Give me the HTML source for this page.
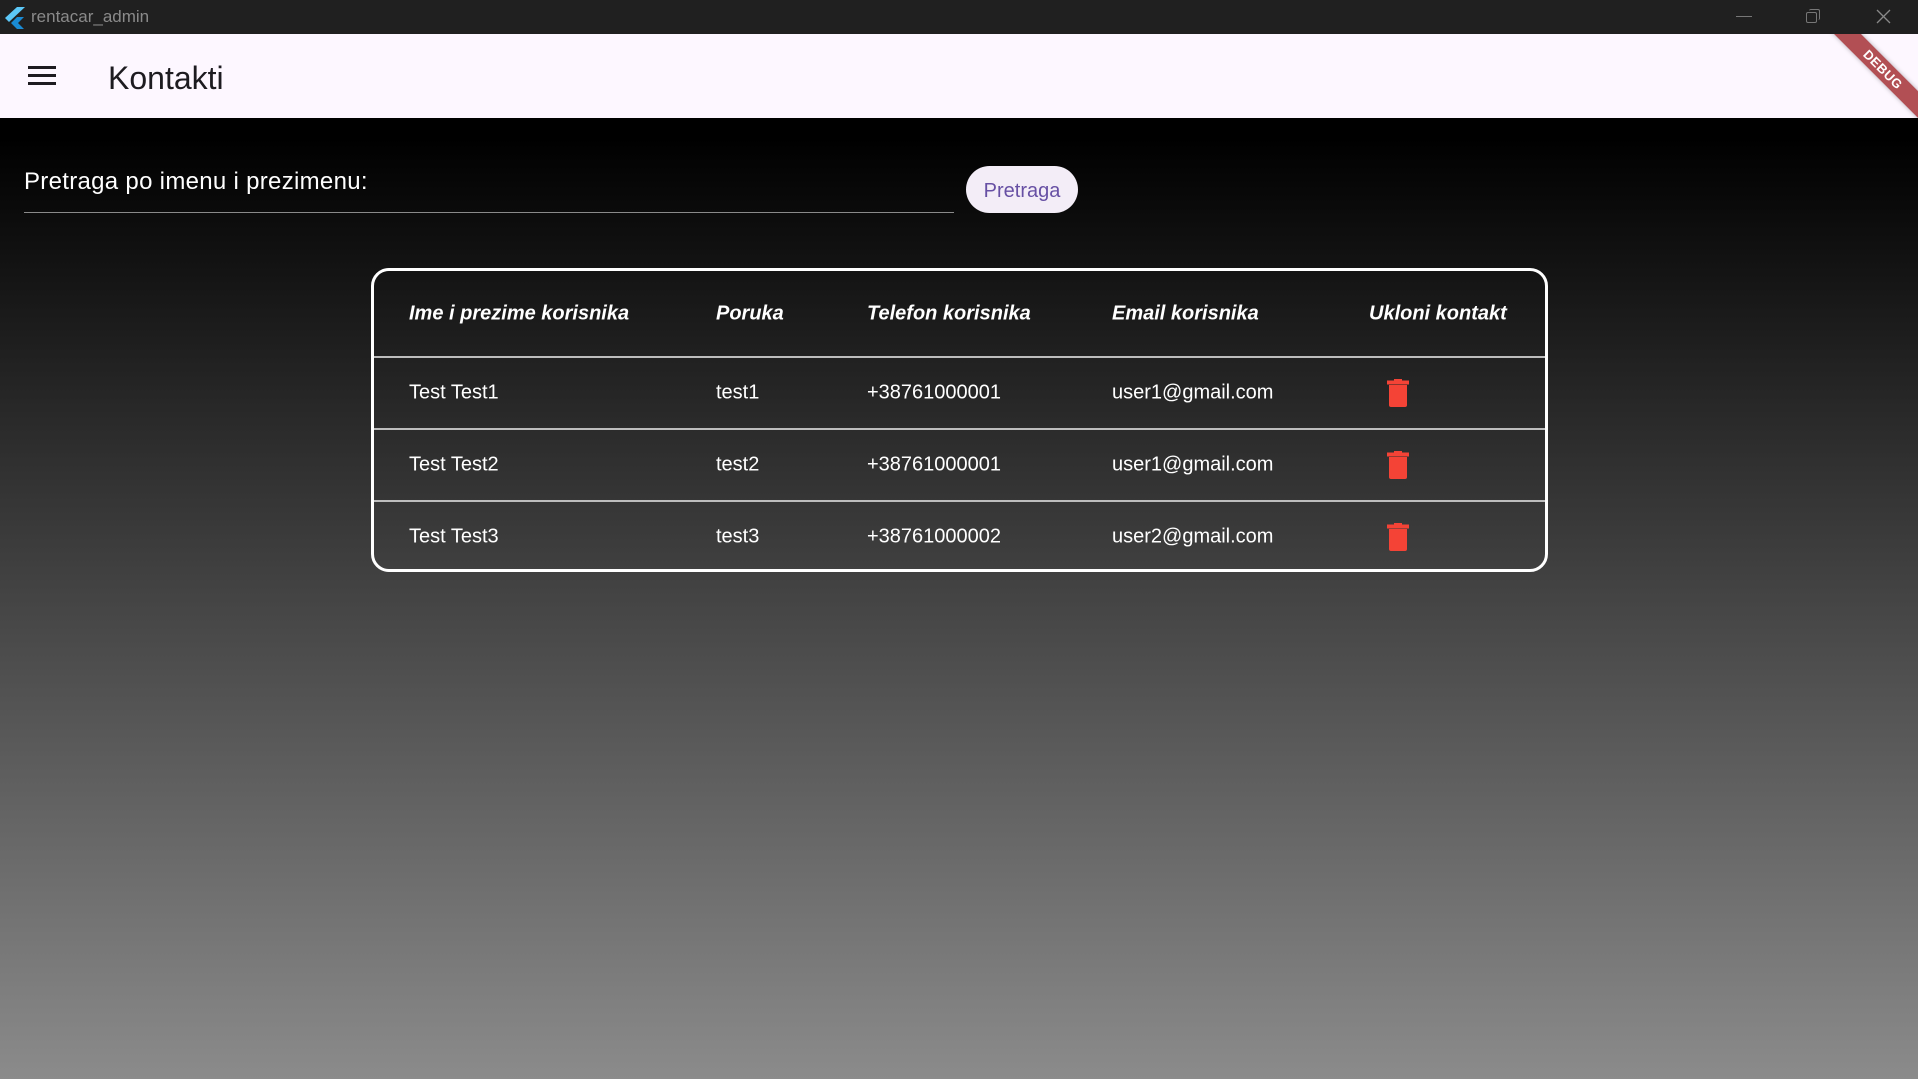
<!DOCTYPE html>
<html><head><meta charset="utf-8"><style>
*{margin:0;padding:0;box-sizing:border-box}
body{width:1918px;height:1079px;overflow:hidden;position:relative;font-family:"Segoe UI","Liberation Sans",sans-serif;background:#000}
.tb{position:absolute;left:0;top:0;width:1918px;height:34px;background:#202020;color:#8a8a8a;font-size:17px}
.tb .t{position:absolute;left:31px;top:7px}
.ab{position:absolute;left:0;top:34px;width:1918px;height:84px;background:#fdf7ff;overflow:hidden}
.ham{position:absolute;left:28px;width:28px;height:3px;background:#1d1b20}
.title{position:absolute;left:108px;top:26px;font-size:32px;color:#1d1b20}
.main{position:absolute;left:0;top:118px;width:1918px;height:961px;background:linear-gradient(#000 0%,#000 2%,#8b8b8b 100%)}
.lbl{position:absolute;left:24px;top:50px;font-size:24px;color:#fff;letter-spacing:0.3px}
.ul{position:absolute;left:24px;top:94px;width:930px;height:1px;background:#8a8a8a}
.btn{position:absolute;left:966px;top:48px;width:112px;height:47px;border-radius:24px;background:#f3edf7;color:#6750a4;font-size:20px;text-align:center;line-height:50px}
.tbl{position:absolute;left:371px;top:150px;width:1177px;height:304px;border:3px solid #fff;border-radius:18px;overflow:hidden}
.row{position:absolute;left:0;width:100%;color:#fff;font-size:20px}
.row span{position:absolute;top:50%;transform:translateY(-50%);white-space:nowrap}
.hd span{font-weight:bold;font-style:italic}
.line{position:absolute;left:0;width:100%;height:2px;background:#bdbdbd}
.trash{position:absolute;left:1013px;top:50%;transform:translateY(-50%);width:22px;height:28px}
</style></head><body>
<div class="tb">
<svg style="position:absolute;left:5px;top:7px" width="20" height="22" viewBox="0 0 20 22"><path d="M12 0L0 11l4 4L20 0z" fill="#5cc8f8"/><path d="M12 10l-6 6 6 6h7l-6-6 6-6z" fill="#1a8bd4"/></svg>
<span class="t">rentacar_admin</span>
<div style="position:absolute;left:1736px;top:16px;width:16px;height:1px;background:#777"></div>
<div style="position:absolute;left:1806px;top:12px;width:11px;height:11px;border:1.5px solid #777;border-radius:2px"></div>
<div style="position:absolute;left:1809px;top:9px;width:11px;height:11px;border-top:1.5px solid #777;border-right:1.5px solid #777;border-radius:2px"></div>
<svg style="position:absolute;left:1876px;top:9px" width="15" height="15"><path d="M1 1L14 14M14 1L1 14" stroke="#888" stroke-width="1.3"/></svg>
</div>
<div class="ab">
<div class="ham" style="top:32px"></div><div class="ham" style="top:40px"></div><div class="ham" style="top:48px"></div>
<div class="title">Kontakti</div>
<div style="position:absolute;left:1783px;top:26px;width:200px;height:19px;background:rgba(170,60,65,0.9);transform:rotate(45deg);color:#fff;font:bold 13px 'Liberation Sans',sans-serif;text-align:center;line-height:19px;letter-spacing:0.5px;box-shadow:0 0 5px rgba(0,0,0,0.3)">DEBUG</div>
</div>
<div class="main">
<div class="lbl">Pretraga po imenu i prezimenu:</div>
<div class="ul"></div>
<div class="btn">Pretraga</div>
<div class="tbl">
<div class="row hd" style="top:0;height:86px"><span style="left:35px">Ime i prezime korisnika</span><span style="left:342px">Poruka</span><span style="left:493px">Telefon korisnika</span><span style="left:738px">Email korisnika</span><span style="left:995px">Ukloni kontakt</span></div>
<div class="line" style="top:85px"></div>
<div class="row" style="top:87px;height:70px"><span style="left:35px">Test Test1</span><span style="left:342px">test1</span><span style="left:493px">+38761000001</span><span style="left:738px">user1@gmail.com</span>
<svg class="trash" viewBox="0 0 22 28"><rect x="7" y="0" width="8" height="2" fill="#f44336"/><rect x="0" y="1.5" width="22" height="4" fill="#f44336"/><path d="M2 6h18v20a2 2 0 0 1-2 2H4a2 2 0 0 1-2-2z" fill="#f44336"/></svg></div>
<div class="line" style="top:157px"></div>
<div class="row" style="top:159px;height:70px"><span style="left:35px">Test Test2</span><span style="left:342px">test2</span><span style="left:493px">+38761000001</span><span style="left:738px">user1@gmail.com</span>
<svg class="trash" viewBox="0 0 22 28"><rect x="7" y="0" width="8" height="2" fill="#f44336"/><rect x="0" y="1.5" width="22" height="4" fill="#f44336"/><path d="M2 6h18v20a2 2 0 0 1-2 2H4a2 2 0 0 1-2-2z" fill="#f44336"/></svg></div>
<div class="line" style="top:229px"></div>
<div class="row" style="top:231px;height:70px"><span style="left:35px">Test Test3</span><span style="left:342px">test3</span><span style="left:493px">+38761000002</span><span style="left:738px">user2@gmail.com</span>
<svg class="trash" viewBox="0 0 22 28"><rect x="7" y="0" width="8" height="2" fill="#f44336"/><rect x="0" y="1.5" width="22" height="4" fill="#f44336"/><path d="M2 6h18v20a2 2 0 0 1-2 2H4a2 2 0 0 1-2-2z" fill="#f44336"/></svg></div>
</div>
</div>
</body></html>
